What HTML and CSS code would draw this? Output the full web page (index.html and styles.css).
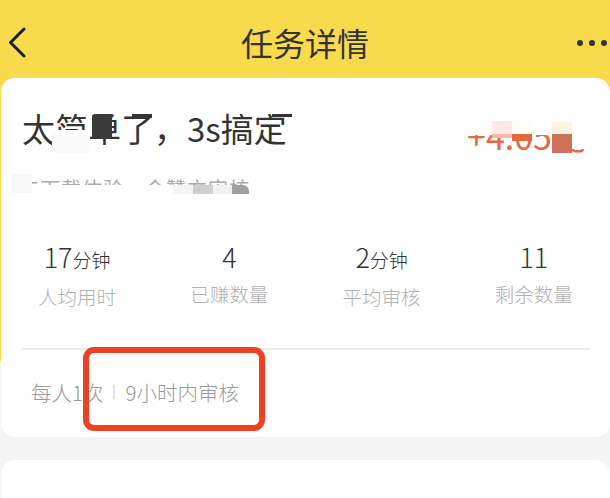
FILE: index.html
```html
<!DOCTYPE html>
<html lang="zh">
<head>
<meta charset="utf-8">
<title>任务详情</title>
<link rel="stylesheet" href="styles.css">
</head>
<body>
<div class="page">
  <header class="nav">
    <svg class="back" width="22" height="32" viewBox="0 0 22 32"><path d="M18 2 L4.500 15.500 L18 29" fill="none" stroke="#1f1f1f" stroke-width="3" stroke-linecap="round" stroke-linejoin="round"/></svg>
    <h1 class="nav-title">任务详情</h1>
    <div class="dots"><i></i><i></i><i></i></div>
  </header>
  <main class="content">
    <section class="card main-card">
      <div class="title-row">
        <h2 class="title">太简单了，3s搞定</h2>
        <div class="price">+4.05元</div>
        <span class="patch p-soft"></span><span class="patch p-low"></span><span class="patch p-dark"></span><span class="patch p-le"></span><span class="patch p-ding"></span>
        <span class="patch q-top"></span><span class="patch q-bot"></span><span class="patch q-pink"></span><span class="patch q-salmon"></span><span class="patch q-cream"></span><span class="patch q-orange"></span><span class="patch q-sand"></span><span class="patch q-red"></span><span class="patch q-gap"></span>
      </div>
      <div class="tags">
        <span>5下载体验</span><span>会赞方审核</span>
        <span class="patch t1"></span><span class="patch t0"></span><span class="patch t2"></span><span class="patch t3"></span><span class="patch t4"></span><span class="patch t5"></span>
      </div>
      <div class="stats">
        <div class="stat"><div class="num">17<small>分钟</small></div><div class="label">人均用时</div></div>
        <div class="stat"><div class="num">4</div><div class="label">已赚数量</div></div>
        <div class="stat"><div class="num">2<small>分钟</small></div><div class="label">平均审核</div></div>
        <div class="stat"><div class="num">11</div><div class="label">剩余数量</div></div>
      </div>
      <div class="foot">
        <span>每人1次</span><i class="sep"></i><span>9小时内审核</span>
        <div class="mark"></div>
      </div>
    </section>
    <section class="card second"></section>
  </main>
</div>
</body>
</html>
```
FILE: styles.css
```css
* { box-sizing: border-box; }
html, body { margin: 0; padding: 0; }
body {
  width: 610px; height: 498px; overflow: hidden;
  background: #f4f4f4;
  font-family: "Noto Sans CJK SC", "Liberation Sans", sans-serif;
}
.page { height: 498px; overflow: hidden; }
.nav {
  height: 78px; background: #f8da4d;
  display: flex; align-items: center; justify-content: center;
  position: relative;
}
.back { position: absolute; left: 6px; top: 27px; }
.nav-title { margin: 5px 0 0; font-size: 32px; font-weight: 400; color: #333; line-height: 44px; }
.dots { position: absolute; left: 577px; top: 40px; display: flex; gap: 6px; }
.dots i { width: 6px; height: 6px; border-radius: 50%; background: #333; }
.content {
  background: linear-gradient(#f8da4d 283px, #f4f4f4 283px);
  padding-left: 1px;
}
.card { background: #fff; border-radius: 14px; }
.main-card { height: 359px; padding: 0 20px 0 21px; position: relative; }
.second { height: 60px; margin-top: 23px; }
.title-row { height: 82px; padding-top: 27px; display: flex; justify-content: space-between; position: relative; }
.title { margin: 0; font-size: 33px; font-weight: 400; color: #333; line-height: 46px; white-space: nowrap; }
.price { font-size: 34px; color: #e8683f; line-height: 46px; padding-top: 8px; margin-right: 4px; }
.patch { position: absolute; display: block; background: #fff; }
.p-soft { left: 30px; top: 55px; width: 38px; height: 20px; background: #f9f9f9; }
.p-low { left: 35px; top: 52px; width: 34px; height: 6px; }
.p-dark { left: 70px; top: 36px; width: 20px; height: 25px; background: #3a3a3a; border-radius: 3px 0 0 0; }
.p-le { left: 110px; top: 36px; width: 20px; height: 4px; background: #333; }
.p-ding { left: 250px; top: 36px; width: 20px; height: 3px; background: #333; }
.q-top { left: 418px; top: 22px; width: 170px; height: 35px; }
.q-bot { left: 418px; top: 75px; width: 170px; height: 7px; }
.q-pink { left: 470px; top: 43px; width: 20px; height: 14px; background: #fdeae6; }
.q-salmon { left: 470px; top: 56px; width: 20px; height: 4px; background: #f9b9a8; }
.q-cream { left: 490px; top: 43px; width: 20px; height: 14px; background: #fffdf8; }
.q-orange { left: 490px; top: 56px; width: 20px; height: 7px; background: #e5683d; }
.q-sand { left: 530px; top: 44px; width: 20px; height: 12px; background: #fdf5e0; }
.q-red { left: 530px; top: 56px; width: 20px; height: 19px; background: #d0705a; }
.q-gap { left: 550px; top: 44px; width: 20px; height: 27px; }
.tags { position: relative; display: flex; gap: 21px; height: 34px; padding-top: 12px; font-size: 20px; letter-spacing: 1px; color: #aaa; line-height: 34px; padding-left: 6px; }
.t1 { left: -21px; top: 25px; width: 340px; height: 30px; }
.t0 { left: -10px; top: 14px; width: 20px; height: 19px; background: #f8f8f8; }
.t2 { left: 151px; top: 25px; width: 20px; height: 9px; background: #f4f4f4; }
.t3 { left: 171px; top: 25px; width: 20px; height: 9px; background: #cfcfcf; }
.t4 { left: 191px; top: 25px; width: 19px; height: 9px; background: #f2f2f2; }
.t5 { left: 210px; top: 25px; width: 17px; height: 9px; background: #a0a0a0; border-radius: 0 6px 0 0; }
.stats { display: grid; grid-template-columns: repeat(4, 1fr); margin: 0 -20px 0 -21px; padding-top: 43px; }
.stat { text-align: center; }
.num { font-size: 27px; font-weight: 300; color: #333; line-height: 40px; }
.num small { font-size: 19px; font-weight: 300; }
.label { font-size: 19.500px; font-weight: 300; color: #b0b0b0; line-height: 28px; margin-top: 3px; }
.foot {
  position: relative; margin-top: 37px; border-top: 2px solid #ececec;
  display: flex; align-items: center; height: 86px; padding: 0 0 0 9px;
  font-size: 20.500px; font-weight: 300; color: #999;
}
.sep { width: 2px; height: 14px; background: #e4e4e4; margin: 0 10px; }
.mark {
  position: absolute; left: 61px; top: -3px; width: 182px; height: 84px;
  border: 6px solid #ee4023; border-radius: 11px;
}
```
